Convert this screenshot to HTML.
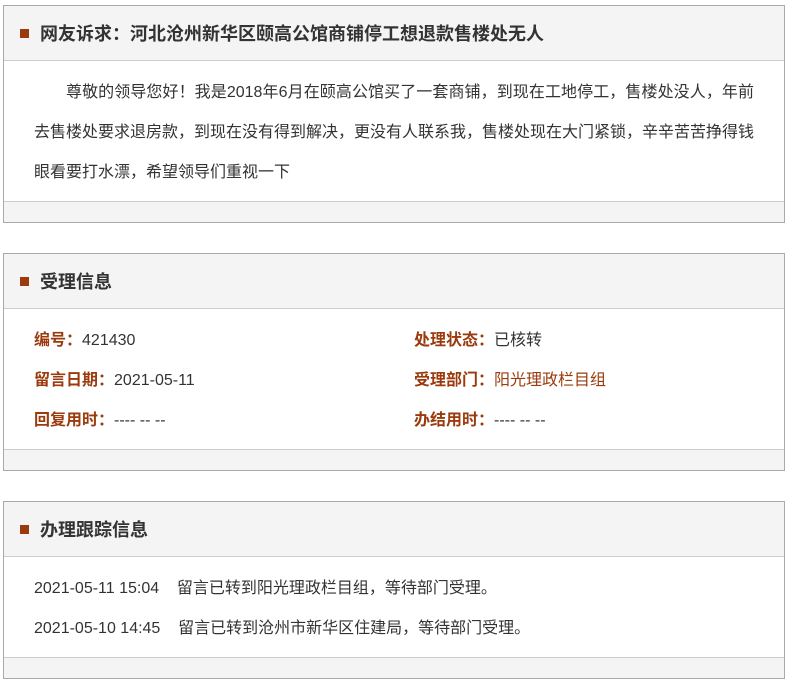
<!DOCTYPE html><html><head><meta charset="utf-8"><style>
body{margin:0;background:#fff;font-family:"Liberation Sans","Noto Sans CJK SC",sans-serif;color:#333;width:788px;height:666px;overflow:hidden}
.p{position:absolute;left:3px;width:780px;border:1px solid #aaa;background:#fff}
.h{height:54px;background:#f4f4f4;border-bottom:1px solid #ccc;position:relative}
.h i{position:absolute;left:16px;top:23px;width:9px;height:9px;background:#9b3a0c}
.h b{position:absolute;left:36px;top:1px;line-height:55px;font-size:18px;color:#333}
.b{padding:12px 30px 8px;font-size:16px;line-height:40px}
.f{height:20px;background:#f4f4f4;border-top:1px solid #ccc}
.l{color:#9b3a0c;font-weight:bold}
.r{display:flex}.r>span{width:380px;flex:none}
</style></head><body>
<div class="p" style="top:5px"><div class="h"><i></i><b>网友诉求：河北沧州新华区颐高公馆商铺停工想退款售楼处无人</b></div>
<div class="b" style="text-indent:32px;text-align:justify">尊敬的领导您好！我是2018年6月在颐高公馆买了一套商铺，到现在工地停工，售楼处没人，年前去售楼处要求退房款，到现在没有得到解决，更没有人联系我，售楼处现在大门紧锁，辛辛苦苦挣得钱眼看要打水漂，希望领导们重视一下</div><div class="f"></div></div>
<div class="p" style="top:253px"><div class="h"><i></i><b>受理信息</b></div>
<div class="b"><div class="r"><span><span class="l">编号：</span>421430</span><span><span class="l">处理状态：</span>已核转</span></div>
<div class="r"><span><span class="l">留言日期：</span>2021-05-11</span><span><span class="l">受理部门：</span><span style="color:#9b3a0c">阳光理政栏目组</span></span></div>
<div class="r"><span><span class="l">回复用时：</span>---- -- --</span><span><span class="l">办结用时：</span>---- -- --</span></div></div><div class="f"></div></div>
<div class="p" style="top:501px"><div class="h"><i></i><b>办理跟踪信息</b></div>
<div class="b"><div>2021-05-11 15:04&nbsp;&nbsp;&nbsp;&nbsp;留言已转到阳光理政栏目组，等待部门受理。</div><div>2021-05-10 14:45&nbsp;&nbsp;&nbsp;&nbsp;留言已转到沧州市新华区住建局，等待部门受理。</div></div><div class="f"></div></div>
</body></html>
